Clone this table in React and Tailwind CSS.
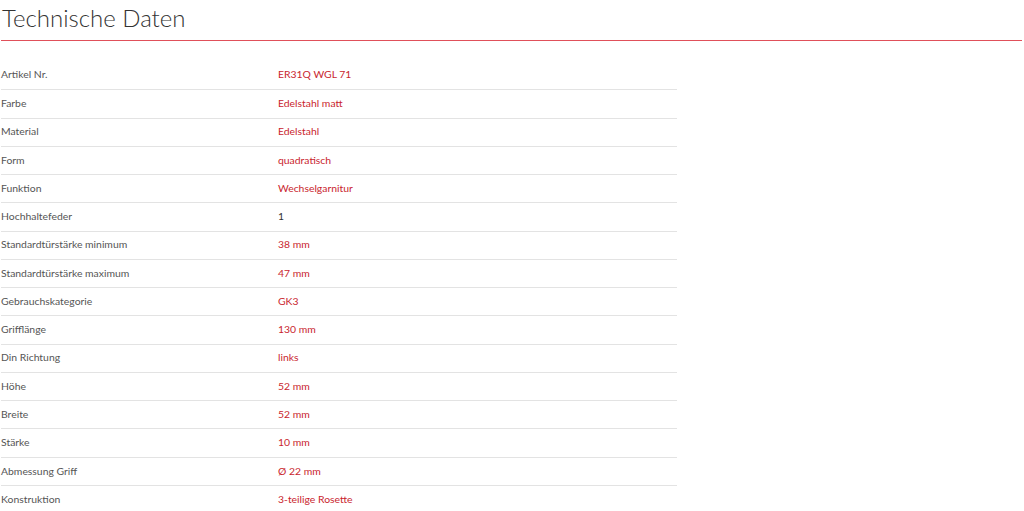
const rows = [
  ['Artikel Nr.', 'ER31Q WGL 71'],
  ['Farbe', 'Edelstahl matt'],
  ['Material', 'Edelstahl'],
  ['Form', 'quadratisch'],
  ['Funktion', 'Wechselgarnitur'],
  ['Hochhaltefeder', '1', true],
  ['Standardtürstärke minimum', '38 mm'],
  ['Standardtürstärke maximum', '47 mm'],
  ['Gebrauchskategorie', 'GK3'],
  ['Grifflänge', '130 mm'],
  ['Din Richtung', 'links'],
  ['Höhe', '52 mm'],
  ['Breite', '52 mm'],
  ['Stärke', '10 mm'],
  ['Abmessung Griff', 'Ø 22 mm'],
  ['Konstruktion', '3-teilige Rosette'],
];

export default function App() {
  return (
    <div className="bg-white min-h-screen font-['Lato',sans-serif] pl-[1px] pr-[2px]">
      <h2 className="text-[24px] font-light text-[#333] leading-none pt-[6px] pb-[10px] pl-[1px]">
        Technische Daten
      </h2>
      <div className="h-px bg-[#e0505a]" />
      <div className="w-[676px] mt-[20px]">
        {rows.map(([label, value, plain], i) => (
          <div
            key={label}
            className={`flex items-center h-[28.27px] text-[10.4px] ${i > 0 ? 'border-t border-[#e3e3e3]' : ''}`}
          >
            <div className="w-[277px] text-[#555]">{label}</div>
            <div className={plain ? 'text-[#333]' : 'text-[#c9252e]'}>{value}</div>
          </div>
        ))}
      </div>
    </div>
  );
}
